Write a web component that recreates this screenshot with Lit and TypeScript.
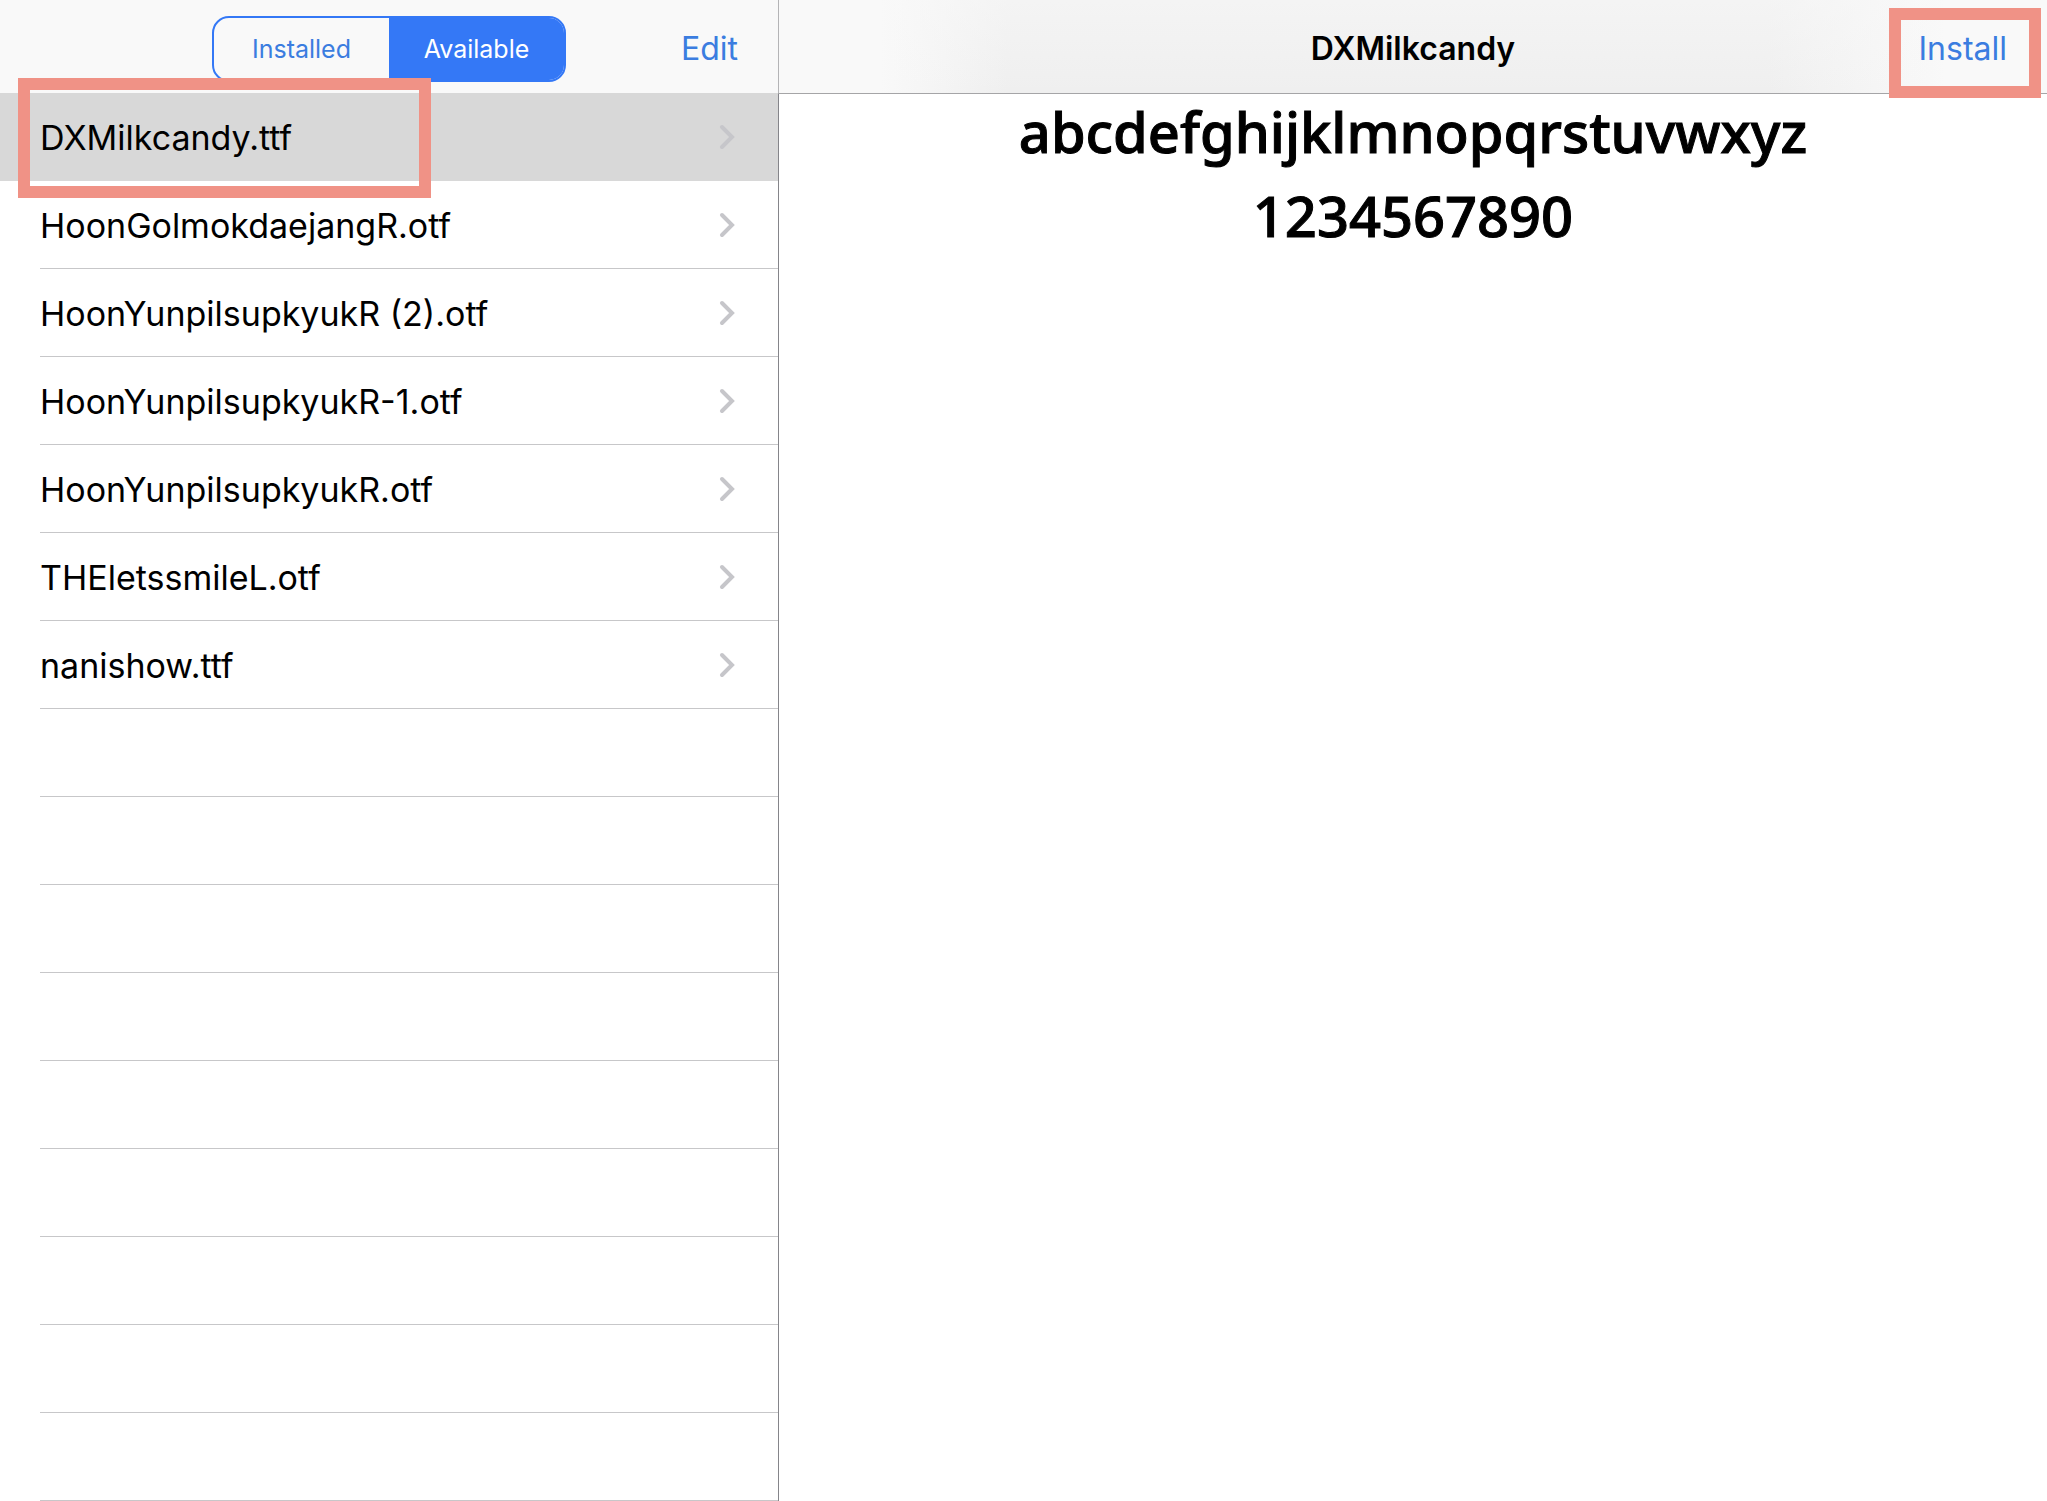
import { LitElement, html, css } from "lit";
import { customElement, property, state } from "lit/decorators.js";
import { classMap } from "lit/directives/class-map.js";

const FONT_FILES = [
  "DXMilkcandy.ttf",
  "HoonGolmokdaejangR.otf",
  "HoonYunpilsupkyukR (2).otf",
  "HoonYunpilsupkyukR-1.otf",
  "HoonYunpilsupkyukR.otf",
  "THEletssmileL.otf",
  "nanishow.ttf",
];

const ROW_COUNT = 16;

@customElement("font-list")
class FontList extends LitElement {
  @property({ type: Array }) files: string[] = [];
  @state() private selected = 0;

  static styles = css`
    :host {
      display: block;
    }
    .list {
      list-style: none;
      margin: 0;
      padding: 0;
    }
    .row {
      position: relative;
      box-sizing: border-box;
      height: 88px;
      padding-left: 40px;
    }
    .row.selected {
      background: #d8d8d8;
    }
    .line {
      display: flex;
      align-items: center;
      justify-content: space-between;
      box-sizing: border-box;
      width: 100%;
      height: 88px;
      margin: 0;
      padding: 0 43px 0 0;
      border: 0;
      border-bottom: 1px solid #c7c7c9;
      background: none;
      color: #000;
      font: 400 34px/44px Inter, "Liberation Sans", sans-serif;
      text-align: left;
    }
    .selected .line {
      border-bottom-color: #d8d8d8;
    }
    .name {
      padding-top: 3px;
    }
    .chevron {
      display: block;
      width: 16px;
      height: 26px;
      fill: none;
      stroke: #c6c6ca;
      stroke-width: 4;
      stroke-linecap: round;
      stroke-linejoin: miter;
    }
    .mark {
      position: absolute;
      top: -15px;
      left: 18px;
      box-sizing: border-box;
      width: 413px;
      height: 120px;
      border: 12px solid #f09286;
      pointer-events: none;
      z-index: 2;
    }
  `;

  render() {
    const rows = Array.from({ length: ROW_COUNT }, (_, i) => this.files[i]);
    return html`<ul class="list">
      ${rows.map((name, i) =>
        name
          ? html`<li class=${classMap({ row: true, selected: i === this.selected })}>
              <button class="line" @click=${() => (this.selected = i)}>
                <span class="name">${name}</span>
                <svg class="chevron" viewBox="0 0 16 26" aria-hidden="true">
                  <path d="M3 3 L13 13 L3 23" />
                </svg>
              </button>
              ${i === 0 ? html`<span class="mark"></span>` : ""}
            </li>`
          : html`<li class="row"><div class="line"></div></li>`
      )}
    </ul>`;
  }
}

@customElement("app-root")
class AppRoot extends LitElement {
  static styles = css`
    :host {
      display: grid;
      grid-template-columns: 779fr 1268fr;
      min-height: 100vh;
      background: #fff;
      color: #000;
      font-family: Inter, "Liberation Sans", sans-serif;
    }
    .master {
      display: flex;
      flex-direction: column;
      min-width: 0;
    }
    .master .bar {
      border-right: 1px solid #b4b4b6;
    }
    .files {
      flex: 1;
      border-right: 1px solid #85858a;
    }
    .bar {
      display: grid;
      grid-template-columns: 1fr auto 1fr;
      align-items: center;
      box-sizing: border-box;
      height: 93px;
      padding: 5px 40px 0;
      background: #f9f9f9;
      box-shadow: 0 1px 0 #a5a5a7;
      position: relative;
    }
    .detail .bar {
      background:
        linear-gradient(to bottom, rgba(249, 249, 249, 0.5), rgba(249, 249, 249, 0)),
        linear-gradient(to right, #f9f9f9 8%, #efefef 18%, #efefef 78%, #f9f9f9 92%);
    }
    .segments {
      grid-column: 2;
      display: grid;
      grid-template-columns: 1fr 1fr;
      box-sizing: border-box;
      width: 354px;
      height: 66px;
      border: 2px solid #3478f6;
      border-radius: 17px;
      overflow: hidden;
    }
    .segment {
      margin: 0;
      padding: 0;
      border: 0;
      background: none;
      color: #3b7de0;
      font: 400 25px/32px Inter, "Liberation Sans", sans-serif;
    }
    .segment.on {
      background: #3478f6;
      color: #fff;
    }
    .action {
      grid-column: 3;
      justify-self: end;
      position: relative;
      margin: 0;
      padding: 0;
      border: 0;
      background: none;
      color: #3b7de0;
      font: 400 32px/44px Inter, "Liberation Sans", sans-serif;
    }
    .mark {
      position: absolute;
      top: -19px;
      right: -34px;
      box-sizing: border-box;
      width: 152px;
      height: 90px;
      border: 12px solid #f09286;
      pointer-events: none;
    }
    .title {
      grid-column: 2;
      margin: 0;
      font-size: 32px;
      line-height: 44px;
      font-weight: 600;
    }
    .sample {
      display: grid;
      gap: 8px;
      text-align: center;
      font: 500 56px/76px "Noto Sans", "Open Sans", sans-serif;
      -webkit-text-stroke: 1px #000;
    }
    .sample p {
      margin: 0;
    }
  `;

  render() {
    return html`
      <section class="master">
        <header class="bar">
          <div class="segments" role="group" aria-label="Fonts">
            <button class="segment" aria-pressed="false">Installed</button>
            <button class="segment on" aria-pressed="true">Available</button>
          </div>
          <button class="action">Edit</button>
        </header>
        <font-list class="files" .files=${FONT_FILES}></font-list>
      </section>
      <main class="detail">
        <header class="bar">
          <h1 class="title">DXMilkcandy</h1>
          <button class="action">Install<span class="mark"></span></button>
        </header>
        <div class="sample">
          <p>abcdefghijklmnopqrstuvwxyz</p>
          <p>1234567890</p>
        </div>
      </main>
    `;
  }
}
